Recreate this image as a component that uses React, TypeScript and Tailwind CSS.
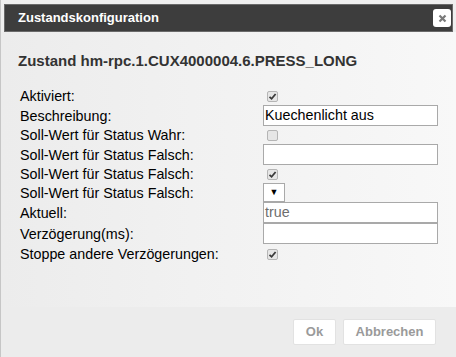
import React from "react";

function Check({ checked }: { checked: boolean }) {
  return (
    <span className="ml-[4px] flex h-[11px] w-[11px] items-center justify-center rounded-[2px] border border-[#b5b5b5] bg-[#e6e6e6]">
      {checked && (
        <svg width="9" height="9" viewBox="0 0 9 9">
          <path d="M1.5 4.8 L3.6 6.8 L7.6 2" fill="none" stroke="#3a3a3a" strokeWidth="1.8" />
        </svg>
      )}
    </span>
  );
}

function TextBox({ value, muted }: { value?: string; muted?: boolean }) {
  return (
    <div
      className={`flex h-[21px] w-[175px] items-center border border-[#a9a9a9] bg-white px-[1px] text-[14.3px] ${
        muted ? "text-[#6d6d6d]" : "text-black"
      }`}
    >
      {value}
    </div>
  );
}

type Row = { label: string; h: string; field: React.ReactNode };

export default function App() {
  const rows: Row[] = [
    { label: "Aktiviert:", h: "h-[18px]", field: <Check checked /> },
    { label: "Beschreibung:", h: "h-[21px]", field: <TextBox value="Kuechenlicht aus" /> },
    { label: "Soll-Wert für Status Wahr:", h: "h-[18px]", field: <Check checked={false} /> },
    { label: "Soll-Wert für Status Falsch:", h: "h-[21px]", field: <TextBox /> },
    { label: "Soll-Wert für Status Falsch:", h: "h-[18px]", field: <Check checked /> },
    {
      label: "Soll-Wert für Status Falsch:",
      h: "h-[19px]",
      field: (
        <div className="flex h-[19px] w-[22px] items-center justify-center border border-[#a9a9a9] bg-white text-[9px] text-black">
          ▼
        </div>
      ),
    },
    { label: "Aktuell:", h: "h-[21px]", field: <TextBox value="true" muted /> },
    { label: "Verzögerung(ms):", h: "h-[21px]", field: <TextBox /> },
    { label: "Stoppe andere Verzögerungen:", h: "h-[20px]", field: <Check checked /> },
  ];

  return (
    <div
      className="flex h-[357px] w-[456px] flex-col border-l border-[#c6c6c6] bg-[#efefef] pt-[4px]"
      style={{ fontFamily: '"Liberation Sans", Arial, sans-serif' }}
    >
      {/* Titelleiste */}
      <div className="mx-[3px] flex h-[28px] items-center justify-between border border-[#6a6a6a] bg-[#3d3d3d] pl-[13px] pr-[1px]">
        <span className="text-[13px] font-bold text-white">Zustandskonfiguration</span>
        <span className="flex h-[18px] w-[18px] items-center justify-center rounded-[3px] bg-white">
          <svg width="9" height="9" viewBox="0 0 9 9">
            <path d="M1.5 1.5 L7.5 7.5 M7.5 1.5 L1.5 7.5" stroke="#7a7a7a" strokeWidth="2.2" />
          </svg>
        </span>
      </div>

      {/* Inhalt */}
      <div className="flex h-[275px] flex-col bg-gradient-to-r from-[#ececec] to-[#f8f8f8] pl-[17px]">
        <h2 className="mt-[20px] text-[15px] font-bold leading-[18px] text-[#333]">
          Zustand hm-rpc.1.CUX4000004.6.PRESS_LONG
        </h2>
        <div className="mt-[17px] flex flex-col">
          {rows.map((r, i) => (
            <div key={i} className={`flex items-center ${r.h}`}>
              <span className="w-[245px] pl-[2px] text-[14.3px] leading-[16px] text-black">{r.label}</span>
              {r.field}
            </div>
          ))}
        </div>
      </div>

      {/* Fußleiste */}
      <div className="flex flex-1 items-start justify-end gap-[7px] bg-[#ececec] pr-[20px] pt-[12px]">
        <button className="h-[26px] w-[43px] rounded-[2px] border border-[#e2e2e2] bg-white text-[13px] font-bold text-[#9a9a9a]">
          Ok
        </button>
        <button className="h-[26px] w-[93px] rounded-[2px] border border-[#e2e2e2] bg-white text-[13px] font-bold text-[#9a9a9a]">
          Abbrechen
        </button>
      </div>
    </div>
  );
}
